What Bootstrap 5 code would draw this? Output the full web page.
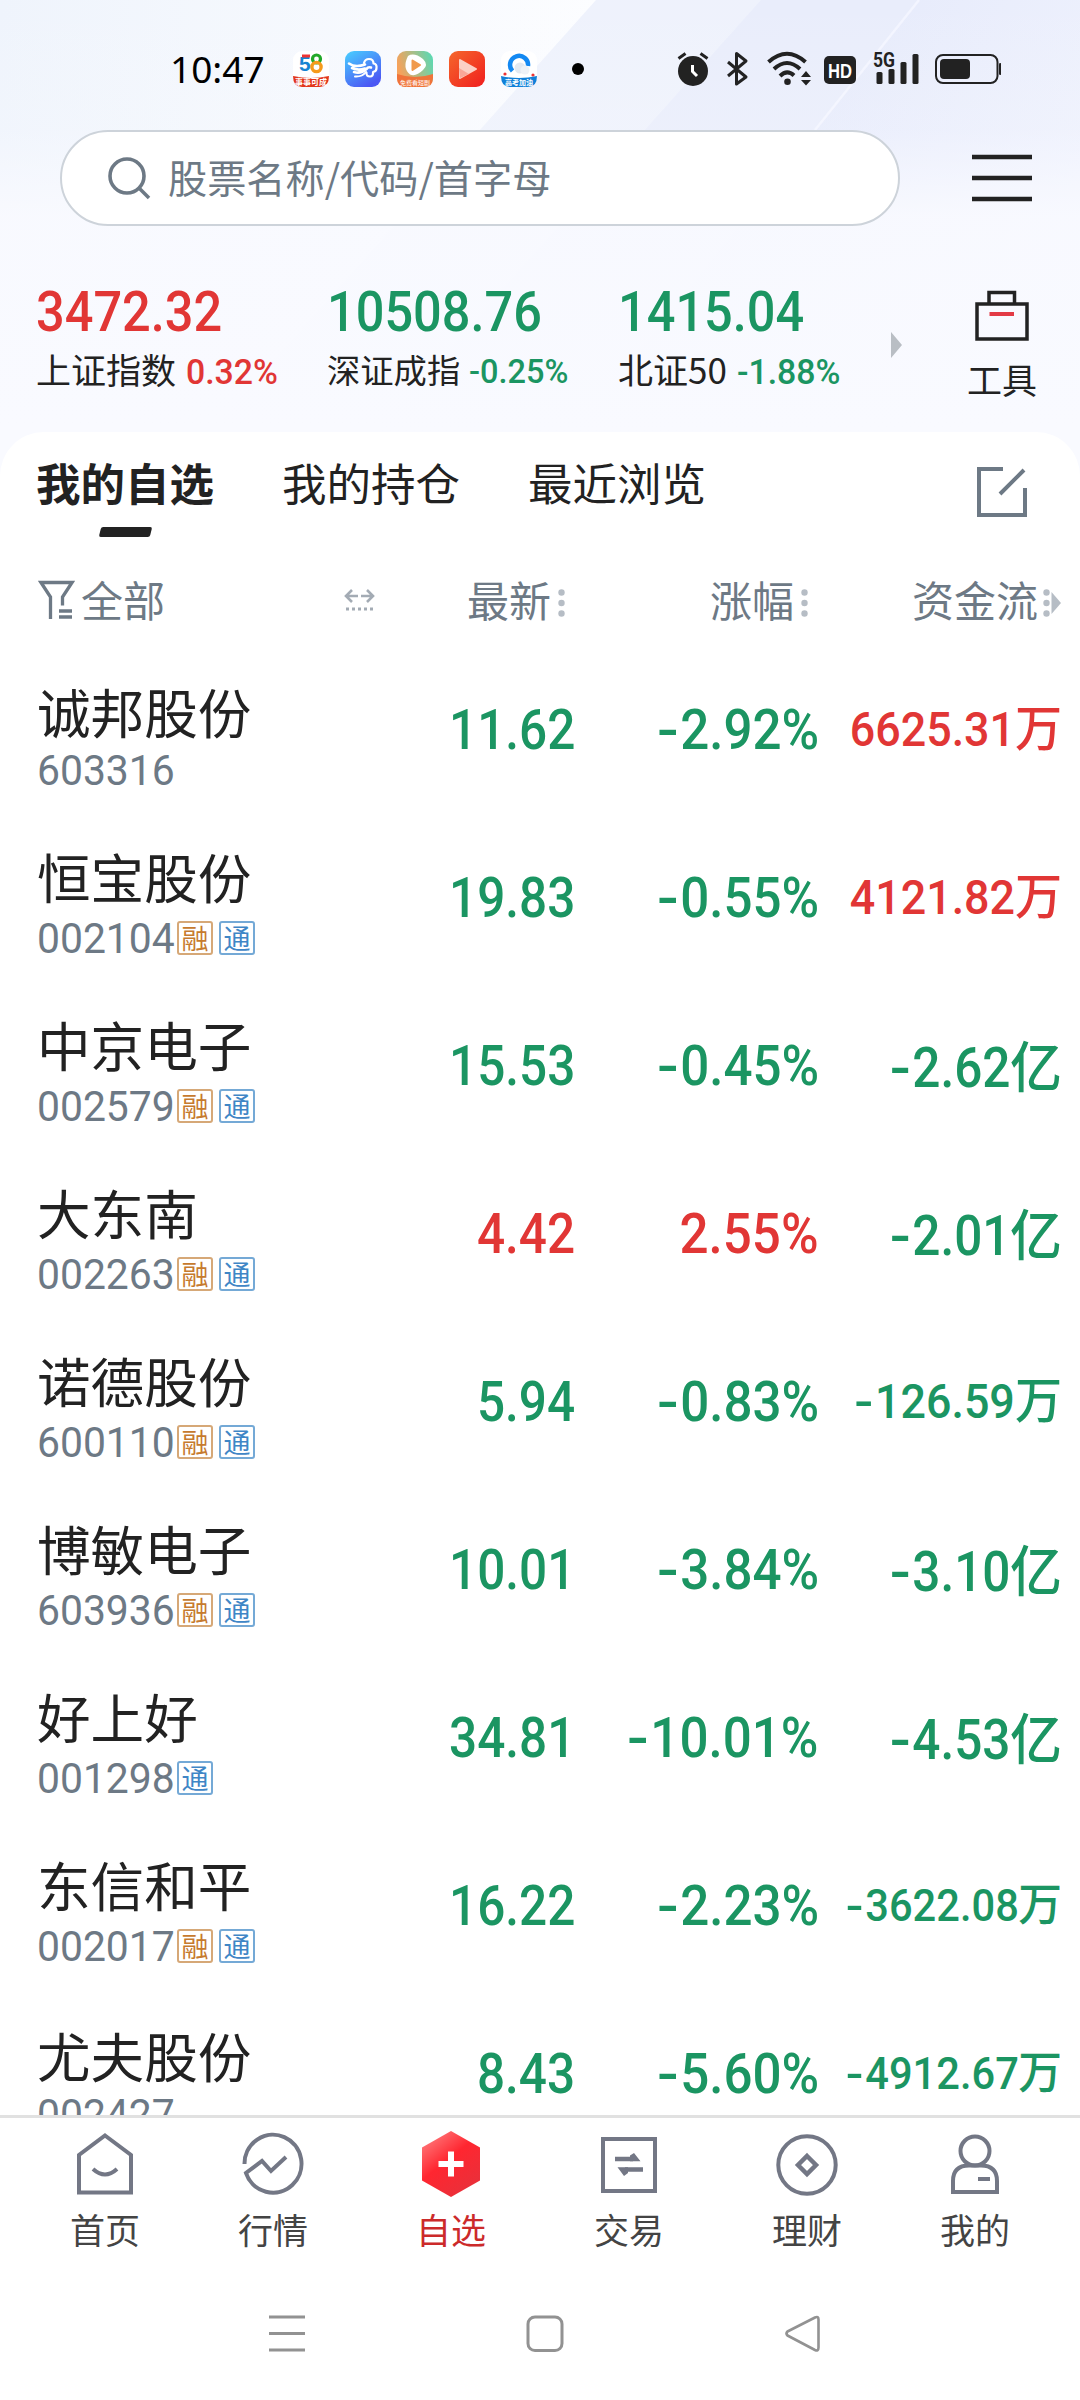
<!DOCTYPE html>
<html lang="zh-CN">
<head>
<meta charset="utf-8">
<meta name="viewport" content="width=device-width, initial-scale=1">
<title>我的自选</title>
<link href="https://cdn.jsdelivr.net/npm/bootstrap@5.3.0/dist/css/bootstrap.min.css" rel="stylesheet">
<style>
:root{--up:#e13635;--down:#1b9562;--ink:#222;--mute:#6d7985;--soft:#b6bdc5}
body{width:1080px;height:2400px;overflow:hidden;background:#fff;color:var(--ink);font-family:"Noto Sans CJK SC",sans-serif;line-height:1}
svg{display:block;flex:none}
.up{color:var(--up)}.down{color:var(--down)}
.hero{height:432px;background:#f9faff}
.hero-bg{top:0;left:0;z-index:0}
.hero>.layer{position:relative;z-index:1}
.statusbar{height:130px;padding:51px 79px 0 170px}
.sys-icons{margin-top:-16px}
.clock{font:400 37px/36px "Noto Sans",sans-serif;color:#000;width:123px}
.apps{gap:16px}
.searchbar{height:96px;padding:0 48px 0 60px}
.searchbox{width:840px;height:96px;border:2px solid #cdd3da;border-radius:48px;background:#fff;padding-left:46px;gap:17px;color:var(--mute);font-size:39.2px;line-height:60px}
.searchbox span{margin-top:-4px}
.din{font-family:Roboto,sans-serif;display:inline-block;white-space:nowrap}
.indices{padding:58px 43px 0 36px;height:206px}
.index-cell{width:291px}
.index-val{font-size:55px;font-weight:500;line-height:56px;transform:scaleX(.918);transform-origin:left;height:56px}
.index-lab{font-size:35px;line-height:50px;margin-top:4px;white-space:nowrap}
.index-lab .din{font-size:34.5px;font-weight:500;margin-left:10px;transform:scaleX(.98);transform-origin:left}
.index-lab.tight{font-size:33.3px}
.index-lab.tight .din{font-size:33.5px;margin-left:9px;transform:scaleX(.97)}
.more-idx{margin:48px 0 0 -18px}
.tool-lab{font-size:35px;line-height:50px;margin-top:13px}
.sheet{height:1683px;border-radius:44px 44px 0 0;background:#fff;overflow:hidden}
.sheet-wrap{background:#f9faff}
.tabline{height:120px;padding:20px 53px 0 36px}
.tabline svg{margin-top:15px}
.tab-item{font-size:44.5px;line-height:60px;width:246px;white-space:nowrap}
.tab-item.on{font-weight:700}
.tab-item.on::after{content:"";display:block;width:51px;height:10px;background:var(--ink);border-radius:2px;transform:skewX(-14deg);margin:15px 0 0 64px}
.colhead{height:96px;color:var(--mute);font-size:42px;line-height:60px;padding-left:38px}
.colhead>div{height:96px}
.colhead span{margin-top:-3px}
.colhead .dots{margin-top:5px}
.c-name{width:307px}.c-price{width:230px}.c-pct{width:244px}.c-flow{width:243px}
.stock{height:168px;padding-left:37px}
.stock .c-name{width:308px}
.n-col{padding-top:30px}
.v-col{padding-top:52px}
.stock-name{font-size:53.6px;line-height:60px;white-space:nowrap}
.plain .n-col{padding-top:33px}
.code-line{margin-top:12px}
.plain .code-line{margin-top:9px}
.stock-code{font-size:43px;font-weight:400;color:var(--mute);line-height:40px;width:140px;transform:scaleX(.95);transform-origin:left}
.tagbox{width:36px;height:34px;border:2px solid;border-radius:3px;font-size:27px;line-height:29px;text-align:center;margin:3px 6px 0 0}
.t-r{color:#c67a2e;border-color:#d6a877}.t-t{color:#3f86c6;border-color:#74a9d6}
.fig{font-family:Roboto,"Noto Sans CJK SC",sans-serif;font-weight:500;font-size:55px;line-height:60px;white-space:nowrap;transform:scaleX(.9);transform-origin:right;display:inline-block}
.c-pct .fig{transform:scaleX(.93)}
.fig b{font-weight:500;display:inline-block;transform:scaleX(1.25);margin-right:4px}
.fig s{display:inline-block;text-decoration:none;font-family:"Noto Sans CJK SC",sans-serif;line-height:1;transform:scaleX(1.05);transform-origin:right;margin-left:2px}
.fig.f2{font-size:49px;transform:scaleX(.915)}.fig.f3{font-size:45px;transform:scaleX(.925)}
.tabbar{height:155px;border-top:3px solid #e1e1e1;padding:13px 26px 0;background:#fff}
.tabbar>div{width:178px;font-size:35px;line-height:50px;color:#444}
.tabbar svg{margin-bottom:7px}
.tabbar>div:first-child,.tabbar>div:last-child{width:158px}
.tabbar>div.cur{color:#cc2a2a}
.sysnav{height:130px;padding:42px 256px 0 266px}
</style>
</head>
<body>
<header class="hero position-relative">
  <svg class="hero-bg position-absolute" width="1080" height="432" viewBox="0 0 1080 432">
    <defs>
      <linearGradient id="l" x1="0" y1="0" x2="1" y2="0"><stop offset="0" stop-color="#eff4fc"/><stop offset="1" stop-color="#fcfdff"/></linearGradient>
      <linearGradient id="s1" x1="0" y1="0" x2="1" y2="0"><stop offset="0" stop-color="#eef2fc"/><stop offset="1" stop-color="#eff2fc"/></linearGradient>
      <linearGradient id="s3" x1="0" y1="0" x2="1" y2=".4"><stop offset="0" stop-color="#dfe5f9"/><stop offset="1" stop-color="#eef1fd"/></linearGradient>
      <linearGradient id="fd" x1="0" y1="0" x2="0" y2="1"><stop offset="0" stop-color="#f9faff" stop-opacity="0"/><stop offset=".3" stop-color="#f9faff" stop-opacity=".2"/><stop offset=".5" stop-color="#f9faff" stop-opacity=".9"/><stop offset="1" stop-color="#f9faff"/></linearGradient>
    </defs>
    <rect width="600" height="432" fill="url(#l)"/>
    <path d="M596 0H1080V432H210Z" fill="url(#s1)"/>
    <path d="M761 0H1080V432H375Z" fill="#e9edfb"/>
    <path d="M919 0H1080V432H575Z" fill="url(#s3)"/>
    <path d="M919 0L815 130" stroke="#f3f5ff" stroke-width="2.500"/>
    <rect width="1080" height="432" fill="url(#fd)"/>
  </svg>

  <div class="layer statusbar d-flex align-items-start">
    <div class="clock">10:47</div>
    <div class="apps d-flex">
      <svg width="36" height="36" viewBox="0 0 36 36"><rect width="36" height="36" rx="9" fill="#fff"/><text x="6" y="20" font-family="Liberation Sans" font-weight="700" font-size="21" fill="#1583d2">5</text><path d="M9 5h8" stroke="#e33" stroke-width="3"/><circle cx="23.500" cy="8" r="4" fill="none" stroke="#22a829" stroke-width="3.200"/><circle cx="23.500" cy="16" r="4.600" fill="none" stroke="#f59a1b" stroke-width="3.400"/><path d="M0 25Q18 29 36 25Q36 36 27 36H9Q0 36 0 25Z" fill="#e2361b"/><text x="18" y="34" text-anchor="middle" font-family="Noto Sans CJK SC" font-weight="700" font-size="8" fill="#fff">事事可成</text></svg>
      <svg width="36" height="36" viewBox="0 0 36 36"><defs><linearGradient id="a2" x1="0" y1="0" x2=".6" y2="1"><stop stop-color="#48d0ff"/><stop offset="1" stop-color="#4b58f4"/></linearGradient></defs><rect width="36" height="36" rx="9" fill="url(#a2)"/><g fill="none" stroke="#fff" stroke-linecap="round" stroke-linejoin="round"><path d="M19 12Q20 8 24 8Q28.500 8 28.500 12.500Q32 13 31.500 17Q31.500 20.500 28 21Q28.500 25.500 25 25.500Q21 25.500 21.500 21.500" stroke-width="2.200"/><path d="M4 12.500Q10 17 20 13.500M7 17Q13 20 20 17.500M9 21Q16 23 21.500 18Q23 15.500 26 16.500" stroke-width="2.600"/><path d="M10 25.500Q17 26 21 21" stroke-width="2"/></g></svg>
      <svg width="36" height="36" viewBox="0 0 36 36"><defs><linearGradient id="a3" x1="0" y1=".3" x2="1" y2="0"><stop stop-color="#f6a25b"/><stop offset="1" stop-color="#52dcb8"/></linearGradient></defs><rect width="36" height="36" rx="9" fill="url(#a3)"/><path d="M0 23Q18 29 36 23V27Q36 36 27 36H9Q0 36 0 27Z" fill="#f0743a"/><path d="M11 5Q17 1 26 8Q32 14 26 19Q19 26 13 23.500Q5 17 11 5Z" fill="#fff"/><path d="M15.500 9.500L23 14L15.500 19Z" fill="#f09a4c" stroke="#f09a4c" stroke-width="2" stroke-linejoin="round"/><text x="18" y="33.500" text-anchor="middle" font-family="Noto Sans CJK SC" font-size="6" fill="#fff">免费看短剧</text></svg>
      <svg width="36" height="36" viewBox="0 0 36 36"><defs><linearGradient id="a4" x1="0" y1="0" x2="1" y2="1"><stop stop-color="#f5672c"/><stop offset="1" stop-color="#f01e1e"/></linearGradient></defs><rect width="36" height="36" rx="9" fill="url(#a4)"/><path d="M11 9L27 18L11 27Z" fill="#fcd0c6" stroke="#fcd0c6" stroke-width="2" stroke-linejoin="round"/><path d="M11 27L10 17L20 23Z" fill="#f9a698"/></svg>
      <svg width="36" height="36" viewBox="0 0 36 36"><rect width="36" height="36" rx="9" fill="#fff"/><path d="M11.500 20A9 9 0 1 1 27 15" fill="none" stroke="#1489f2" stroke-width="4.500"/><circle cx="19" cy="17" r="5.500" fill="#e3e9f1"/><circle cx="24" cy="19" r="4.500" fill="#eef2f7"/><circle cx="4" cy="23" r="1.600" fill="#e33"/><circle cx="32" cy="24" r="1.600" fill="#e33"/><path d="M0 25Q18 29 36 25Q36 36 27 36H9Q0 36 0 25Z" fill="#1180d8"/><text x="18" y="34" text-anchor="middle" font-family="Noto Sans CJK SC" font-weight="700" font-size="7" fill="#fff">高考加油</text></svg>
    </div>
    <svg class="sys-icons ms-auto" width="430" height="60" viewBox="571 35 430 60" fill="#222" stroke="none">
      <circle cx="578" cy="69" r="6" fill="#000"/>
      <circle cx="693" cy="71" r="15"/><path d="M678.500 58.500L685.500 53.500M700.500 53.500L707.500 58.500" stroke="#222" stroke-width="3"/><path d="M692.500 65V71.500L697 76" fill="none" stroke="#fff" stroke-width="3"/>
      <path d="M728 62L746 77L736.500 84V53.500L746 61L728 76" fill="none" stroke="#222" stroke-width="3" stroke-linejoin="round"/>
      <g fill="none" stroke="#222" stroke-width="4"><path d="M768.500 62Q787 45.500 805.500 62"/><path d="M774 69Q787 57 800 69"/><path d="M780 76Q787 69 794 75.500"/></g><circle cx="787.500" cy="81.700" r="3.300"/><path d="M801 77L806 71L811 77ZM801 80H811L806 85.500Z"/>
      <rect x="824" y="56" width="32" height="28" rx="5"/><text x="840" y="77.500" text-anchor="middle" font-family="Liberation Sans" font-weight="700" font-size="20" textLength="24" lengthAdjust="spacingAndGlyphs" fill="#fff">HD</text>
      <text x="873" y="66.500" font-family="Roboto" font-weight="700" font-size="20" textLength="22" lengthAdjust="spacingAndGlyphs">5G</text>
      <rect x="876.500" y="72" width="6" height="12" rx="1.500"/><rect x="888.500" y="69" width="6" height="15" rx="1.500"/><rect x="900.500" y="62" width="6" height="22" rx="1.500"/><rect x="912.500" y="54" width="6" height="30" rx="1.500"/>
      <rect x="936" y="55" width="61.500" height="28" rx="7" fill="none" stroke="#222" stroke-width="2"/><rect x="940" y="59" width="30" height="20" rx="4"/><rect x="999" y="63" width="2.500" height="12" rx="1.200"/>
    </svg>
  </div>

  <div class="layer searchbar d-flex align-items-center justify-content-between">
    <div class="searchbox d-flex align-items-center">
      <svg width="43" height="43" viewBox="0 0 43 43" fill="none" stroke="#6d7985" stroke-width="3.600"><circle cx="19" cy="19" r="17"/><path d="M31 31L41 41"/></svg>
      <span>股票名称/代码/首字母</span>
    </div>
    <svg width="60" height="48" viewBox="0 0 60 48"><path d="M0 3H60M0 24H60M0 45H60" stroke="#222" stroke-width="4.500"/></svg>
  </div>

  <div class="layer indices d-flex">
    <div class="index-cell"><div class="din index-val up">3472.32</div><div class="index-lab">上证指数<span class="din up">0.32%</span></div></div>
    <div class="index-cell"><div class="din index-val down">10508.76</div><div class="index-lab tight">深证成指<span class="din down">-0.25%</span></div></div>
    <div class="index-cell"><div class="din index-val down">1415.04</div><div class="index-lab">北证50<span class="din down">-1.88%</span></div></div>
    <svg class="more-idx" width="11" height="26" viewBox="0 0 11 26"><path d="M0 0L11 13L0 26Z" fill="#b9bec4"/></svg>
    <div class="ms-auto text-center d-flex flex-column align-items-center">
      <svg width="54" height="57" viewBox="0 0 54 57" fill="none"><path d="M2 20H52V55H2ZM14 20V8.500H39.500V20" stroke="#222" stroke-width="3.500"/><path d="M14.500 30H39" stroke="#e33a45" stroke-width="4"/></svg>
      <div class="tool-lab">工具</div>
    </div>
  </div>
</header>

<div class="sheet-wrap">
<main class="sheet">
  <div class="tabline d-flex">
    <div class="tab-item on">我的自选</div><div class="tab-item">我的持仓</div><div class="tab-item">最近浏览</div>
    <svg class="ms-auto" width="50" height="50" viewBox="0 0 50 50" fill="none" stroke="#6d7985" stroke-width="4"><path d="M26 2H2V48H48V21M47 3L23 27"/></svg>
  </div>
  <div class="colhead d-flex">
    <div class="c-name d-flex align-items-center">
      <svg width="37" height="40" viewBox="0 0 37 40" fill="none" stroke="#6d7985" stroke-width="3.300"><path d="M12.500 39V17L3 2.500H34L24.500 17V25.500M21 31H34M21 37H34"/></svg>
      <span style="margin-left:6px">全部</span>
      <svg class="ms-auto" style="margin-right:-30px" width="31" height="24" viewBox="0 0 31 24" fill="none" stroke="#a3abb4" stroke-width="2.600"><path d="M14 8H2M8 2L2 8L8 14M17 8H29M23 2L29 8L23 14"/><path d="M2 21H30" stroke-width="3" stroke-dasharray="3 3"/></svg>
    </div>
    <div class="c-price d-flex align-items-center justify-content-end"><span>最新</span><svg class="dots" style="margin:5px 5px 0 7px" width="12" height="28" viewBox="0 0 12 28" fill="#b6bdc5"><circle cx="3.500" cy="3.500" r="3.200"/><circle cx="3.500" cy="14" r="3.200"/><circle cx="3.500" cy="24.500" r="3.200"/></svg></div>
    <div class="c-pct d-flex align-items-center justify-content-end"><span>涨幅</span><svg class="dots" style="margin:5px 6px 0 7px" width="12" height="28" viewBox="0 0 12 28" fill="#b6bdc5"><circle cx="3.500" cy="3.500" r="3.200"/><circle cx="3.500" cy="14" r="3.200"/><circle cx="3.500" cy="24.500" r="3.200"/></svg></div>
    <div class="c-flow d-flex align-items-center justify-content-end"><span>资金流</span><svg class="dots" style="margin-left:4px" width="20" height="28" viewBox="0 0 20 28" fill="#b6bdc5"><circle cx="4.500" cy="3.500" r="3.200"/><circle cx="4.500" cy="14" r="3.200"/><circle cx="4.500" cy="24.500" r="3.200"/><path d="M9.500 3L19 14L9.500 25Z"/></svg></div>
  </div>

  <div class="stock plain d-flex"><div class="c-name n-col"><div class="stock-name">诚邦股份</div><div class="d-flex code-line"><span class="din stock-code">603316</span></div></div><div class="c-price text-end v-col down"><span class="fig">11.62</span></div><div class="c-pct text-end v-col down"><span class="fig"><b>-</b>2.92%</span></div><div class="c-flow text-end v-col up"><span class="fig f2">6625.31<s>万</s></span></div></div>
  <div class="stock d-flex"><div class="c-name n-col"><div class="stock-name">恒宝股份</div><div class="d-flex code-line"><span class="din stock-code">002104</span><span class="tagbox t-r">融</span><span class="tagbox t-t">通</span></div></div><div class="c-price text-end v-col down"><span class="fig">19.83</span></div><div class="c-pct text-end v-col down"><span class="fig"><b>-</b>0.55%</span></div><div class="c-flow text-end v-col up"><span class="fig f2">4121.82<s>万</s></span></div></div>
  <div class="stock d-flex"><div class="c-name n-col"><div class="stock-name">中京电子</div><div class="d-flex code-line"><span class="din stock-code">002579</span><span class="tagbox t-r">融</span><span class="tagbox t-t">通</span></div></div><div class="c-price text-end v-col down"><span class="fig">15.53</span></div><div class="c-pct text-end v-col down"><span class="fig"><b>-</b>0.45%</span></div><div class="c-flow text-end v-col down"><span class="fig"><b>-</b>2.62<s>亿</s></span></div></div>
  <div class="stock d-flex"><div class="c-name n-col"><div class="stock-name">大东南</div><div class="d-flex code-line"><span class="din stock-code">002263</span><span class="tagbox t-r">融</span><span class="tagbox t-t">通</span></div></div><div class="c-price text-end v-col up"><span class="fig">4.42</span></div><div class="c-pct text-end v-col up"><span class="fig">2.55%</span></div><div class="c-flow text-end v-col down"><span class="fig"><b>-</b>2.01<s>亿</s></span></div></div>
  <div class="stock d-flex"><div class="c-name n-col"><div class="stock-name">诺德股份</div><div class="d-flex code-line"><span class="din stock-code">600110</span><span class="tagbox t-r">融</span><span class="tagbox t-t">通</span></div></div><div class="c-price text-end v-col down"><span class="fig">5.94</span></div><div class="c-pct text-end v-col down"><span class="fig"><b>-</b>0.83%</span></div><div class="c-flow text-end v-col down"><span class="fig f2"><b>-</b>126.59<s>万</s></span></div></div>
  <div class="stock d-flex"><div class="c-name n-col"><div class="stock-name">博敏电子</div><div class="d-flex code-line"><span class="din stock-code">603936</span><span class="tagbox t-r">融</span><span class="tagbox t-t">通</span></div></div><div class="c-price text-end v-col down"><span class="fig">10.01</span></div><div class="c-pct text-end v-col down"><span class="fig"><b>-</b>3.84%</span></div><div class="c-flow text-end v-col down"><span class="fig"><b>-</b>3.10<s>亿</s></span></div></div>
  <div class="stock d-flex"><div class="c-name n-col"><div class="stock-name">好上好</div><div class="d-flex code-line"><span class="din stock-code">001298</span><span class="tagbox t-t">通</span></div></div><div class="c-price text-end v-col down"><span class="fig">34.81</span></div><div class="c-pct text-end v-col down"><span class="fig"><b>-</b>10.01%</span></div><div class="c-flow text-end v-col down"><span class="fig"><b>-</b>4.53<s>亿</s></span></div></div>
  <div class="stock d-flex"><div class="c-name n-col"><div class="stock-name">东信和平</div><div class="d-flex code-line"><span class="din stock-code">002017</span><span class="tagbox t-r">融</span><span class="tagbox t-t">通</span></div></div><div class="c-price text-end v-col down"><span class="fig">16.22</span></div><div class="c-pct text-end v-col down"><span class="fig"><b>-</b>2.23%</span></div><div class="c-flow text-end v-col down"><span class="fig f3"><b>-</b>3622.08<s>万</s></span></div></div>
  <div class="stock plain d-flex"><div class="c-name n-col"><div class="stock-name">尤夫股份</div><div class="d-flex code-line"><span class="din stock-code">002427</span></div></div><div class="c-price text-end v-col down"><span class="fig">8.43</span></div><div class="c-pct text-end v-col down"><span class="fig"><b>-</b>5.60%</span></div><div class="c-flow text-end v-col down"><span class="fig f3"><b>-</b>4912.67<s>万</s></span></div></div>
</main>
</div>

<nav class="tabbar d-flex text-center">
  <div><svg class="mx-auto" width="66" height="66" viewBox="0 0 66 66" fill="none" stroke="#737785" stroke-width="4"><path d="M33 4.500L59 24V61.500H7V24ZM21 38Q33 49 45 38" /></svg>首页</div>
  <div><svg class="mx-auto" width="66" height="66" viewBox="0 0 66 66" fill="none" stroke="#737785" stroke-width="4"><path d="M4.500 33A28.500 29 0 1 1 6 42L22 30L31 40L46 26"/></svg>行情</div>
  <div class="cur"><svg class="mx-auto" width="66" height="66" viewBox="0 0 66 66"><defs><linearGradient id="hx" x1="0" y1="0" x2=".7" y2="1"><stop stop-color="#ff8d8d"/><stop offset=".5" stop-color="#ff2630"/><stop offset="1" stop-color="#e9303a"/></linearGradient></defs><path d="M33 0L62 16.500V49.500L33 66L4 49.500V16.500Z" fill="url(#hx)"/><path d="M33 20.500V45.500M20.500 33H45.500" stroke="#fff" stroke-width="6"/></svg>自选</div>
  <div><svg class="mx-auto" width="66" height="66" viewBox="0 0 66 66" fill="none" stroke="#737785" stroke-width="4"><rect x="7" y="8" width="52" height="52"/><path d="M19 28H37M47 38.500H29" stroke-width="4.500"/><path d="M34 30.250H44.500L38 22L34 24.500ZM32 36.250H21.500L28 45L32 42Z" fill="#737785" stroke="none"/></svg>交易</div>
  <div><svg class="mx-auto" width="66" height="66" viewBox="0 0 66 66" fill="none" stroke="#737785" stroke-width="4"><circle cx="33" cy="34" r="28.700"/><path d="M33 25L42 34L33 43L24 34Z" stroke-width="4.500"/></svg>理财</div>
  <div><svg class="mx-auto" width="66" height="66" viewBox="0 0 66 66" fill="none" stroke="#737785" stroke-width="4"><circle cx="33" cy="20" r="14.500"/><path d="M27 34.500H39Q55 34.500 55 50V61H11V50Q11 34.500 27 34.500ZM36 48H48"/></svg>我的</div>
</nav>
<div class="sysnav d-flex justify-content-between">
  <svg width="42" height="42" viewBox="0 0 42 42" stroke="#929292" stroke-width="3"><path d="M3 5H39M3 21.500H39M3 38H39"/></svg>
  <svg width="42" height="42" viewBox="0 0 42 42" fill="none" stroke="#929292" stroke-width="3"><rect x="4" y="5" width="34" height="33.500" rx="7"/></svg>
  <svg width="42" height="42" viewBox="0 0 42 42" fill="none" stroke="#929292" stroke-width="2.600" stroke-linejoin="round"><path d="M5.500 19.500L33 5.500Q36.500 4 36.500 7.500V35.500Q36.500 39.500 33 38L5.500 23.500Q3.500 21.500 5.500 19.500Z"/></svg>
</div>
<script src="https://cdn.jsdelivr.net/npm/bootstrap@5.3.0/dist/js/bootstrap.bundle.min.js"></script>
</body>
</html>
